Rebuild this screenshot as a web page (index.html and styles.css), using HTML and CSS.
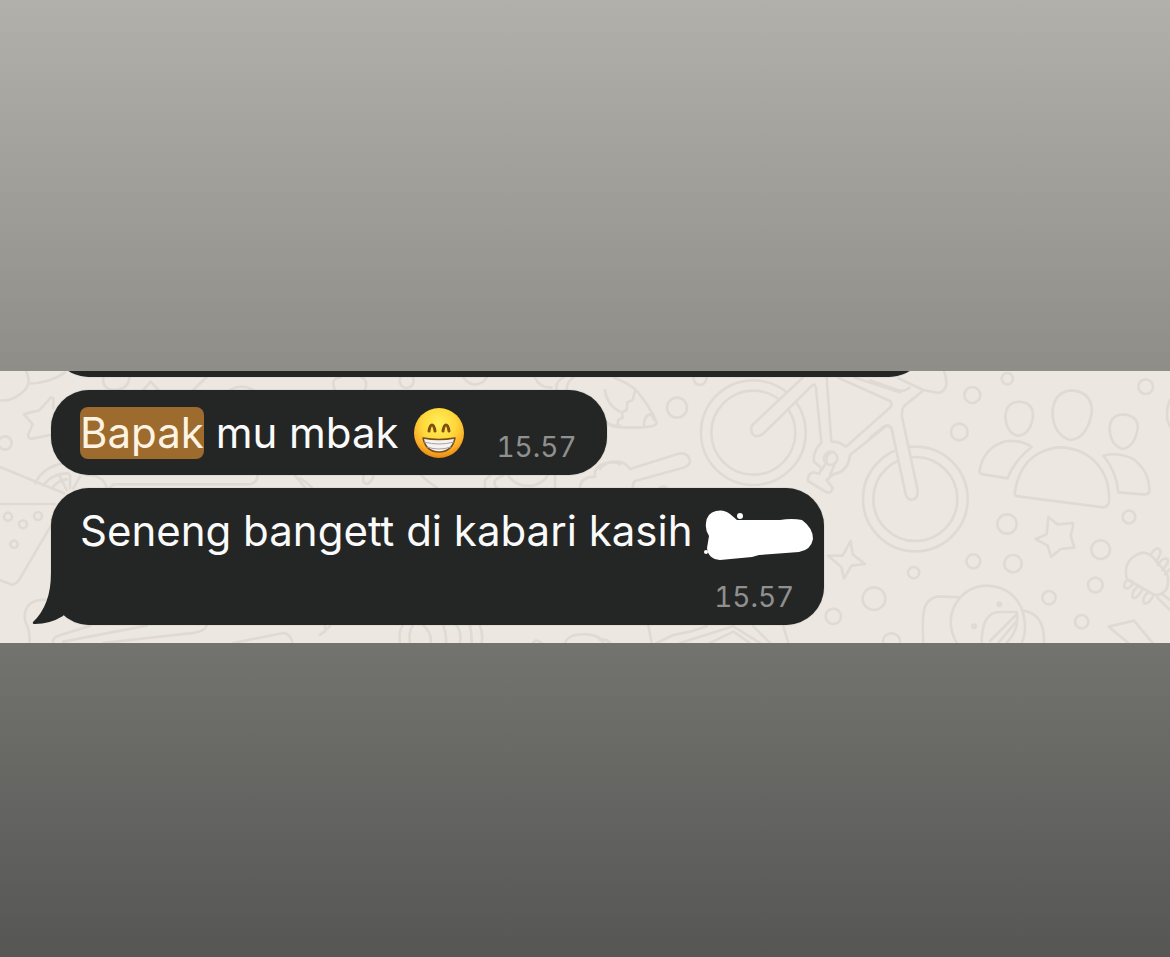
FILE: index.html
```html
<!DOCTYPE html>
<html lang="id">
<head>
    <meta charset="UTF-8">
    <meta name="viewport" content="width=device-width, initial-scale=1.0">
    <title>Chat</title>
    <link rel="stylesheet" href="styles.css">
</head>
<body>
<main class="chat">
    <!-- wallpaper doodles -->
    <svg class="wallpaper" viewBox="0 0 1170 272" preserveAspectRatio="xMinYMin slice" aria-hidden="true">
        <g transform="translate(0 -6) scale(.33333)">
            <path d="M78 18Q100 60 60 88Q30 110 0 106M84 56Q150 55 195 22M310 38Q305 70 340 75Q385 75 388 38M430 75L452 50L475 75M580 75L620 36M690 75Q725 55 760 75"/>
            <path d="M72 148Q95 140 118 136L152 98Q163 96 160 112L160 130M72 148L98 178L84 210Q86 225 100 220L150 210"/>
            <circle cx="15" cy="234" r="20"/>
            <path d="M0 306L192 385M0 417H165M0 645L35 659Q50 658 60 640L160 470M105 355Q130 305 190 295M130 362Q155 325 205 325M155 370Q175 345 200 343M210 330V370M240 335L220 370M180 335L200 375M260 330Q310 330 320 368"/>
            <circle cx="24" cy="455" r="12"/><circle cx="69" cy="478" r="12"/><circle cx="114" cy="453" r="12"/><circle cx="42" cy="538" r="11"/>
            <path d="M330 368L340 358L750 358Q775 350 772 330M885 332L915 368"/>
            <path d="M88 834Q92 800 76 770Q68 735 92 715Q110 703 145 704M160 834Q155 820 175 812L270 783M190 830L440 782M310 834L560 806Q612 802 620 782M700 834L850 804Q870 805 878 834"/>
        </g>
        <g transform="translate(300 -6) scale(.33333)">
            <path d="M105 75Q90 40 120 38M185 38Q205 45 195 75M490 38Q510 62 530 58Q550 55 560 38M705 38Q720 70 755 68M770 75Q765 50 790 38M800 75Q800 50 820 38"/>
            <circle cx="320" cy="48" r="21"/>
            <path d="M0 340Q25 355 35 368M190 332V350Q205 368 220 335M365 332L385 350L410 368M555 368V345L570 332M590 368Q570 345 610 332M625 332Q650 368 700 362Q735 350 742 332M765 332V368M840 365Q845 335 885 335Q880 300 930 292Q950 290 960 298M915 75Q920 120 960 140M925 175Q940 185 960 182"/>
            <path d="M60 810L90 784M75 800V784M300 834Q295 800 308 782M330 834Q325 800 338 782M370 782Q395 800 392 834M430 782Q440 805 438 834M470 782Q485 800 480 834M510 782Q515 805 515 834M540 782Q550 805 545 834M700 834Q705 820 725 834M795 834Q805 805 860 808Q900 810 910 834"/>
        </g>
        <g transform="translate(600 -6) scale(.33333)">
            <path d="M42 38Q90 55 112 80Q150 125 170 172Q170 180 155 184Q90 192 40 184Q20 178 15 165M105 78L98 105L82 112L80 135L66 142L68 158L55 164L52 184M132 180Q132 152 150 148Q160 152 162 165"/>
            <circle cx="231" cy="128" r="30"/>
            <path d="M280 38Q282 60 300 60Q318 58 320 38"/>
            <circle cx="460" cy="203" r="157"/><circle cx="460" cy="203" r="126"/>
            <path class="patch" d="M608 38L455 182Q450 205 465 213Q480 216 492 204L638 60Z"/>
            <path d="M608 38L455 182Q450 205 465 213Q480 216 492 204L638 60Q645 55 648 70L664 233Q638 260 642 290L665 310L658 327L640 322Q622 325 624 348L680 382Q695 385 698 370L680 345L700 328Q745 320 750 270L860 182Q870 182 874 190L900 300M680 38L694 230Q720 230 738 245L868 130Q880 118 870 108L715 38M765 38L900 82"/>
            <circle cx="692" cy="280" r="20"/><path d="M692 262Q675 275 680 290L665 315M705 295L690 330"/>
            <path d="M0 312Q15 290 50 290Q75 290 90 312L240 265Q268 264 270 290Q268 302 250 308L105 348Q98 355 98 368M180 368Q190 362 200 368"/>
            <path d="M752 528L758 568L795 597L755 602L732 640L724 606L684 572L728 572Z"/>
            <circle cx="822" cy="701" r="34"/><circle cx="700" cy="754" r="23"/>
            <path d="M850 834Q845 810 875 804Q900 808 900 830M145 782L155 834M170 834L220 810L270 800L320 784M240 834L400 784L480 834M330 834L400 800L450 834M460 784L510 834M550 784L565 834M0 825Q20 820 30 834"/>
        </g>
        <g transform="translate(870 -6) scale(.33333)">
            <circle cx="136" cy="402" r="157"/><circle cx="136" cy="402" r="126"/>
            <path class="patch" d="M96 150L143 375Q145 402 126 404Q112 404 107 388L62 186Z"/>
            <path d="M158 78L103 122Q94 135 96 155L143 375Q145 402 126 404Q112 404 107 388L65 190Q58 178 42 184L0 218"/>
            <path d="M85 40L160 75L205 84Q225 80 229 60Q230 35 222 18M118 68Q105 82 80 74L0 46"/>
            <circle cx="307" cy="90" r="24"/><circle cx="412" cy="41" r="17"/><circle cx="268" cy="201" r="25"/><circle cx="827" cy="65" r="22"/>
            <path d="M447 110Q490 112 489 155Q480 210 443 212Q410 205 406 155Q408 112 447 110ZM605 76Q670 82 665 145Q650 222 600 225Q552 210 547 145Q550 80 605 76ZM760 148Q805 152 803 190Q795 245 757 252Q720 240 719 190Q720 150 760 148Z"/>
            <path d="M485 246Q455 225 410 228Q340 245 328 320Q330 328 345 329L413 340Q430 290 485 246ZM434 385Q450 265 560 247Q650 245 695 315Q720 355 717 410Q716 425 700 427L445 394Q434 394 434 385ZM700 272Q745 260 790 282Q840 320 838 380Q835 390 820 388L745 382Q740 320 700 272Z"/>
            <path d="M900 105Q888 130 892 165L900 185"/>
            <circle cx="411" cy="477" r="29"/><circle cx="777" cy="456" r="19"/><circle cx="692" cy="554" r="28"/><circle cx="310" cy="589" r="21"/><circle cx="429" cy="596" r="26"/><circle cx="131" cy="623" r="17"/><circle cx="676" cy="660" r="22"/><circle cx="537" cy="698" r="20"/><circle cx="635" cy="770" r="20"/>
            <path d="M535 456L563 478L608 474Q612 480 602 512L613 548L572 552L543 576L533 542L497 522L530 508Z"/>
            <path d="M160 834Q155 750 165 725Q175 700 205 694L270 697M260 834Q230 780 250 730Q280 665 350 662Q425 665 455 730Q475 790 455 834M458 737Q525 745 522 834M335 834Q335 745 385 741H440Q450 790 410 834M360 828L438 750M385 834L438 770"/>
            <circle cx="388" cy="718" r="5"/><circle cx="312" cy="784" r="5"/>
            <path d="M768 625Q765 580 815 563Q835 563 850 578L890 625Q900 650 888 675Q870 695 850 688L775 645Q768 640 768 625ZM842 570Q855 545 868 552Q878 562 858 590M863 600Q880 575 892 583Q900 590 877 615M885 628L900 612M785 648Q765 640 762 662Q768 682 790 655M805 665Q785 675 788 698Q800 705 818 672M835 682Q815 695 822 715Q835 720 850 692M862 698L900 735M880 690L900 705"/>
            <path d="M775 834L716 785L792 767L848 834"/>
        </g>
    </svg>

    <div class="messages">
        <div class="bubble bubble-previous"></div>

        <div class="bubble">
            <p class="text"><mark>Bapak</mark> mu mbak
                <svg class="emoji" viewBox="0 0 50 50" role="img" aria-label="😁">
                    <defs>
                        <radialGradient id="face" cx=".5" cy=".32" r=".68">
                            <stop offset="0" stop-color="#fff05c"/>
                            <stop offset=".5" stop-color="#ffd83a"/>
                            <stop offset=".8" stop-color="#fbb02a"/>
                            <stop offset="1" stop-color="#e88712"/>
                        </radialGradient>
                    </defs>
                    <circle cx="25" cy="25" r="25" fill="url(#face)"/>
                    <path d="M15 23Q16 17 18 17T21 23M29 23Q30 17 32 17T35 23" fill="none" stroke="#805011" stroke-width="3" stroke-linecap="round"/>
                    <path d="M9 30Q25 33 41 30Q38 44 25 44T9 30Z" fill="#f5f2f2" stroke="#75501c" stroke-width="1.5" stroke-linejoin="round"/>
                    <path d="M10 34Q25 38 40 34M13 39Q25 43 37 39" fill="none" stroke="#a8a1a0" stroke-width="1"/>
                </svg>
            </p>
            <time class="time">15.57</time>
        </div>

        <div class="bubble bubble-last">
            <p class="text">Seneng bangett di kabari kasih
                <svg class="scribble" viewBox="0 0 110 52" aria-hidden="true">
                    <circle cx="36" cy="7" r="3"/>
                    <circle cx="2" cy="43" r="2"/>
                    <path d="M2 14Q3 4 12 2Q20 0 26 5L33 11H76Q88 9 98 11Q109 19 109 30Q107 41 95 43L55 46L48 48L16 51Q4 50 3 39L5 27Q1 21 2 14Z"/>
                </svg>
            </p>
            <time class="time">15.57</time>
            <svg class="tail" viewBox="0 0 40 52" aria-hidden="true">
                <path d="M19 0Q19 32 1 49Q0 51 3 51Q18 51 31 43L40 30V0Z"/>
            </svg>
        </div>
    </div>
</main>
</body>
</html>
```
FILE: styles.css
```css
body {
    margin: 0;
    min-height: 100vh;
    display: grid;
    grid-template-rows: 371fr auto 314fr;
    background: linear-gradient(#b1b0ab, #8e8d88 39%, #737370 67%, #565654);
    font-family: Inter, "Liberation Sans", sans-serif;
}

.chat {
    grid-row: 2;
    position: relative;
    overflow: hidden;
    background-color: #ece8e1;
}

.wallpaper {
    position: absolute;
    inset: 0;
    width: 100%;
    height: 100%;
    fill: none;
    stroke: #dfdbd4;
    stroke-width: 8;
    stroke-linejoin: round;
    stroke-linecap: round;
}

.wallpaper .patch {
    fill: #ece8e1;
    stroke: none;
}

.messages {
    position: relative;
    display: flex;
    flex-direction: column;
    align-items: flex-start;
    gap: 13px;
    padding: 0 51px 18px;
}

.bubble {
    display: flex;
    align-items: flex-end;
    gap: 32px;
    padding: 17px 30px 16px 29px;
    border-radius: 38px;
    background-color: #242625;
    box-shadow: 0 0 1px rgba(0, 0, 0, 0.5);
}

/* only the lower edge of this one is scrolled into view */
.bubble-previous {
    box-sizing: border-box;
    width: 82%;
    height: 80px;
    margin-top: -74px;
}

.bubble-last {
    position: relative;
    flex-direction: column;
    align-items: stretch;
    gap: 28px;
    padding-right: 10px;
}

.text {
    margin: 0;
    color: #fafafa;
    font-size: 42px;
    line-height: 52px;
}

mark {
    display: inline-block;
    border-radius: 8px;
    background-color: #9c6b2d;
    color: #fff3e3;
}

.emoji {
    width: 50px;
    height: 50px;
    margin: -14px 0 -6px 4px;
    vertical-align: middle;
}

.time {
    color: #8f908f;
    font-size: 28px;
    font-optical-sizing: none;
    font-variant-numeric: tabular-nums;
    line-height: 24px;
}

.bubble-last .time {
    padding-right: 20px;
    text-align: right;
}

.scribble {
    width: 110px;
    height: 52px;
    margin: -10px 0;
    vertical-align: middle;
    fill: #ffffff;
}

.tail {
    position: absolute;
    left: -19px;
    bottom: 0;
    width: 40px;
    height: 52px;
    fill: #242625;
}
```
